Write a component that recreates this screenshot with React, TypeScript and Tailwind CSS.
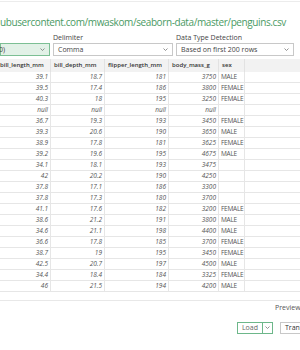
import React from "react";

type Row = [string, string, string, string, string];

const rows: Row[] = [
  ["39.1", "18.7", "181", "3750", "MALE"],
  ["39.5", "17.4", "186", "3800", "FEMALE"],
  ["40.3", "18", "195", "3250", "FEMALE"],
  ["null", "null", "null", "null", ""],
  ["36.7", "19.3", "193", "3450", "FEMALE"],
  ["39.3", "20.6", "190", "3650", "MALE"],
  ["38.9", "17.8", "181", "3625", "FEMALE"],
  ["39.2", "19.6", "195", "4675", "MALE"],
  ["34.1", "18.1", "193", "3475", ""],
  ["42", "20.2", "190", "4250", ""],
  ["37.8", "17.1", "186", "3300", ""],
  ["37.8", "17.3", "180", "3700", ""],
  ["41.1", "17.6", "182", "3200", "FEMALE"],
  ["38.6", "21.2", "191", "3800", "MALE"],
  ["34.6", "21.1", "198", "4400", "MALE"],
  ["36.6", "17.8", "185", "3700", "FEMALE"],
  ["38.7", "19", "195", "3450", "FEMALE"],
  ["42.5", "20.7", "197", "4500", "MALE"],
  ["34.4", "18.4", "184", "3325", "FEMALE"],
  ["46", "21.5", "194", "4200", "MALE"],
];

const headers = ["bill_length_mm", "bill_depth_mm", "flipper_length_mm", "body_mass_g", "sex"];
const widths = ["w-[54px]", "w-[54px]", "w-[64px]", "w-[50px]", "w-[26px]"];

function Caret() {
  return (
    <svg width="5" height="3" viewBox="0 0 5 3" className="shrink-0">
      <path d="M0.5 0.5 L2.5 2.5 L4.5 0.5" fill="none" stroke="#777" strokeWidth="0.8" />
    </svg>
  );
}

export default function App() {
  return (
    <div
      className="w-[300px] h-[350px] overflow-hidden bg-white flex flex-col"
      style={{ fontFamily: '"Open Sans", "Noto Sans", sans-serif' }}
    >
      <div className="h-px mt-px bg-[#ececec]" />
      <div className="mt-[14px] h-[14px] leading-[14px] text-[10px] text-[#4a9a64] whitespace-nowrap tracking-[-0.4px]">
        ubusercontent.com/mwaskom/seaborn-data/master/penguins.csv
      </div>

      <div className="mt-[4px] flex gap-[3px] text-[7px] text-[#444]">
        <div className="w-[50px] flex flex-col">
          <div className="h-[10px]" />
          <div className="h-[13px] border border-[#7cbf94] bg-[#e2f1e7] flex items-center justify-between pr-[4px]">
            <span className="-ml-[2px] leading-none">0)</span>
            <Caret />
          </div>
        </div>
        <div className="w-[120px] flex flex-col">
          <div className="h-[10px] leading-[9px] whitespace-nowrap">Delimiter</div>
          <div className="h-[13px] border border-[#c8c8c8] flex items-center justify-between pl-[4px] pr-[4px]">
            <span className="leading-none">Comma</span>
            <Caret />
          </div>
        </div>
        <div className="w-[118px] flex flex-col">
          <div className="h-[10px] leading-[9px] whitespace-nowrap">Data Type Detection</div>
          <div className="h-[13px] border border-[#c8c8c8] flex items-center justify-between pl-[4px] pr-[4px]">
            <span className="leading-none whitespace-nowrap">Based on first 200 rows</span>
            <Caret />
          </div>
        </div>
      </div>

      <div className="mt-[3px] -ml-[3px] flex flex-col">
        <div className="flex h-[13px] bg-[#f2f2f2] text-[6px]">
          {headers.map((h, i) => (
            <div
              key={h}
              className={`${widths[i]} border-r border-[#e2e2e2] flex items-center pl-[3px] font-semibold text-[#333] whitespace-nowrap overflow-hidden`}
            >
              {h}
            </div>
          ))}
        </div>
        {rows.map((r, ri) => (
          <div key={ri} className="flex h-[11px] border-b border-[#e6e6e6] text-[6.5px]">
            {r.map((v, ci) => (
              <div
                key={ci}
                className={`${widths[ci]} border-r border-[#e6e6e6] flex items-center whitespace-nowrap overflow-hidden ${
                  ci < 4
                    ? "justify-end pr-[2px] italic text-[#555]"
                    : "pl-[2px] text-[#555] tracking-[-0.25px]"
                }`}
              >
                {v}
              </div>
            ))}
          </div>
        ))}
      </div>

      <div className="mt-[8px] h-px bg-[#e8e8e8]" />
      <div className="mt-[2px] h-[10px] pl-[275px] text-[7px] leading-[10px] text-[#555] whitespace-nowrap">
        Preview downloaded on
      </div>

      <div className="mt-[9px] flex pl-[237px] gap-[7px] text-[7px]">
        <div className="flex h-[12px] border border-[#6db78a]">
          <div className="w-[25px] flex items-center justify-center text-[#666] border-r border-[#6db78a] leading-none">
            Load
          </div>
          <div className="w-[9px] flex items-center justify-center">
            <Caret />
          </div>
        </div>
        <div className="h-[12px] border border-[#c8c8c8] pl-[4px] flex items-center text-[#333] whitespace-nowrap leading-none">
          Transform Data
        </div>
      </div>

      <div className="mt-[16px] h-px bg-[#e8e8e8]" />
    </div>
  );
}
